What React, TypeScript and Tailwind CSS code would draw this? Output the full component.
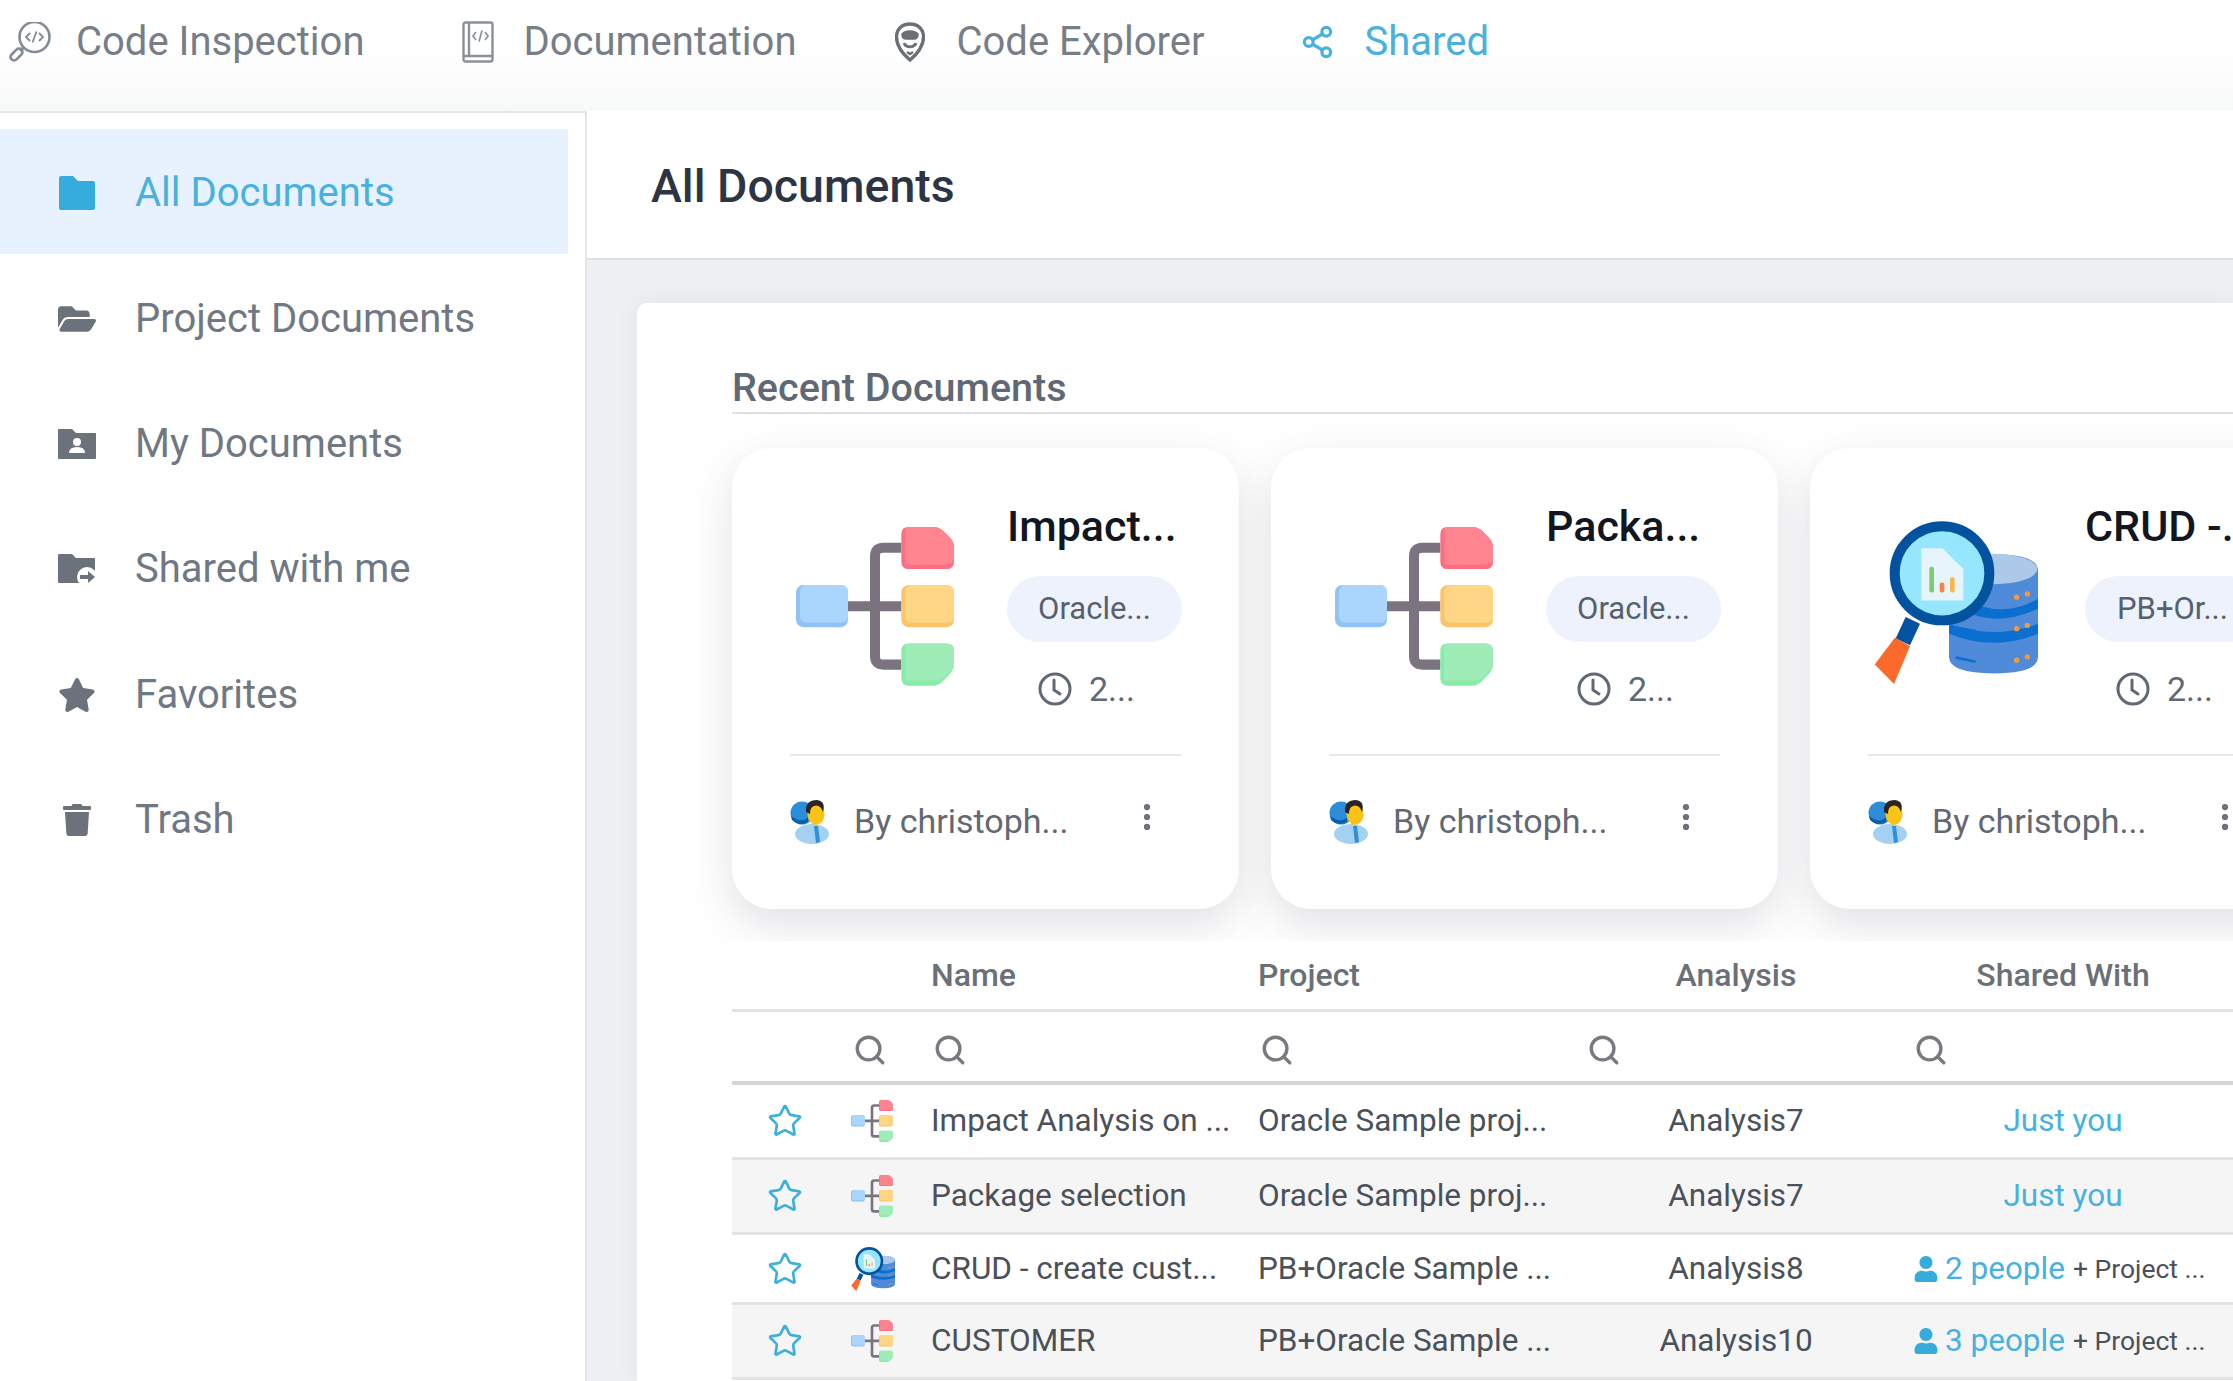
import { MoreVertical, Search, Share2, Star } from "lucide-react";
import { FaFolderOpen, FaStar, FaTrash, FaUser } from "react-icons/fa";

const font = { fontFamily: "Roboto, sans-serif" };

function InspectIcon() {
  return (
    <svg viewBox="0 0 43 40" className="h-[40px] w-[43px]" fill="none" stroke="#848b93" strokeWidth="2.6">
      <circle cx="25.5" cy="15" r="15" />
      <path d="M14 26 l-3 3" strokeWidth="3" />
      <rect x="0.5" y="29" width="14" height="7" rx="3.5" transform="rotate(-45 7.5 32.5)" />
      <path d="M21 11l-4 4 4 4M30 11l4 4-4 4M27.5 9.5l-4 11" strokeWidth="1.8" />
    </svg>
  );
}

function BookIcon() {
  return (
    <svg viewBox="0 0 32 42" className="h-[42px] w-[32px]" fill="none" stroke="#8b9198" strokeWidth="2.4">
      <rect x="1.5" y="1.5" width="29" height="39" rx="2" />
      <path d="M7 1.5v33M1.5 35h29" />
      <path d="M14 11l-3 4 3 4M23 11l3 4-3 4M20 9.5l-3 11" strokeWidth="1.7" />
    </svg>
  );
}

function ExplorerIcon() {
  return (
    <svg viewBox="0 0 30 40" className="h-[40px] w-[30px]" fill="none" stroke="#6b7076" strokeWidth="3.4">
      <path d="M15 2 C23 2 28.5 7 28.5 15 C28.5 25 21 33 15 38 C9 33 1.5 25 1.5 15 C1.5 7 7 2 15 2Z" />
      <path d="M7 12 C11 8 19 8 23 12 C23 16 21 17 19 17 L11 17 C9 17 7 16 7 12Z" fill="#6b7076" strokeWidth="1.5" />
      <path d="M9 21 C11 26 19 26 21 21" strokeWidth="3" />
      <path d="M12 30 L15 32 L18 30" strokeWidth="2.4" />
    </svg>
  );
}

function FolderIcon({ color }: { color: string }) {
  return (
    <svg viewBox="0 0 36 34" className="h-[34px] w-[36px]" fill={color}>
      <path d="M0 2 Q0 0 2 0 H14 L19 5 H34 Q36 5 36 7 V32 Q36 34 34 34 H2 Q0 34 0 32Z" />
    </svg>
  );
}

function FolderPersonIcon() {
  return (
    <svg viewBox="0 0 38 30" className="h-[30px] w-[38px]">
      <path d="M0 1 Q0 0 1 0 H14 L18 4 H37 Q38 4 38 5 V29 Q38 30 37 30 H1 Q0 30 0 29Z" fill="#6c727b" />
      <circle cx="19" cy="13" r="4" fill="#fff" />
      <path d="M11 24 Q11 18 19 18 Q27 18 27 24Z" fill="#fff" />
    </svg>
  );
}

function FolderShareIcon() {
  return (
    <svg viewBox="0 0 38 31" className="h-[31px] w-[38px]">
      <path d="M0 1 Q0 0 1 0 H14 L18 4 H36 Q37 4 37 5 V29 H1 Q0 29 0 28Z" fill="#6c727b" />
      <circle cx="29" cy="23" r="10" fill="#fff" />
      <path d="M22 21 h8 v-4 l7 6 -7 6 v-4 h-8z" fill="#6c727b" />
    </svg>
  );
}

function DiagramIcon({ className }: { className: string }) {
  return (
    <svg viewBox="228 318 474 476" className={className} preserveAspectRatio="none">
      <path d="M544 380 H490 Q465 380 465 405 V705 Q465 730 490 730 H544 M384 555 H544" fill="none" stroke="#7b7480" strokeWidth="30" />
      <rect x="228" y="492" width="156" height="126" rx="22" fill="#8fc3f5" />
      <rect x="240" y="492" width="144" height="112" rx="18" fill="#aad6fd" />
      <path d="M566 318 H640 Q660 318 675 335 L690 350 Q702 362 702 380 V422 Q702 444 680 444 H566 Q544 444 544 422 V340 Q544 318 566 318Z" fill="#fb6f80" />
      <path d="M566 318 H640 Q660 318 675 335 L690 350 Q702 362 702 380 V410 Q702 430 680 430 H556 V330 Q556 318 566 318Z" fill="#fe8490" />
      <rect x="544" y="492" width="158" height="126" rx="22" fill="#fcc468" />
      <rect x="556" y="492" width="146" height="112" rx="18" fill="#fed685" />
      <path d="M566 667 H680 Q702 667 702 689 V730 Q702 745 690 757 L670 778 Q655 793 640 793 H566 Q544 793 544 771 V689 Q544 667 566 667Z" fill="#86eca6" />
      <path d="M566 667 H680 Q702 667 702 689 V725 Q702 740 690 750 L672 768 Q660 778 645 778 H556 V680 Q556 667 566 667Z" fill="#9fecb8" />
    </svg>
  );
}

function DatabaseIcon({ className }: { className: string }) {
  return (
    <svg viewBox="280 300 492 492" className={className} preserveAspectRatio="none">
      <path d="M505 470 Q505 400 640 400 Q772 400 772 450 V710 Q772 760 640 760 Q505 760 505 710Z" fill="#4f8bd8" />
      <ellipse cx="640" cy="445" rx="130" ry="46" fill="#acc9ea" />
      <path d="M505 610 Q640 660 772 610 V640 Q640 695 505 640Z" fill="#0a6fcf" />
      <path d="M540 530 Q660 600 772 535 V565 Q640 625 540 565Z" fill="#0a6fcf" />
      <path d="M525 712 L585 725 M525 622 L585 632" stroke="#0a6fcf" strokeWidth="8" fill="none" />
      <g fill="#f39a3c">
        <circle cx="708" cy="530" r="8" />
        <circle cx="740" cy="520" r="8" />
        <circle cx="708" cy="625" r="8" />
        <circle cx="740" cy="615" r="8" />
        <circle cx="708" cy="720" r="8" />
        <circle cx="740" cy="710" r="8" />
      </g>
      <path d="M375 590 L345 655 L388 675 L418 610Z" fill="#03529f" />
      <path d="M343 652 L388 678 L340 792 L282 733Z" fill="#fb6a2a" />
      <circle cx="484" cy="458" r="142" fill="#96e6fd" stroke="#03529f" strokeWidth="30" />
      <path d="M422 382 H485 L548 445 V540 H422Z" fill="#e6f5fb" />
      <rect x="446" y="438" width="14" height="78" rx="6" fill="#7fcb6d" />
      <rect x="477" y="486" width="14" height="30" rx="6" fill="#fb8240" />
      <rect x="508" y="470" width="14" height="46" rx="6" fill="#fbb84a" />
    </svg>
  );
}

function AvatarIcon() {
  return (
    <svg viewBox="0 0 40 44" className="h-[44px] w-[40px]">
      <ellipse cx="22" cy="34" rx="17" ry="10" fill="#a4d0f1" />
      <path d="M24 26 L28 26 L30 42 L26 43Z" fill="#2f8fd8" />
      <circle cx="12" cy="13" r="11.5" fill="#2c8ed9" />
      <path d="M1 16 Q12 24 18 17 L18 22 Q10 27 2 20Z" fill="#0b5fae" />
      <ellipse cx="26" cy="14" rx="8.5" ry="11" fill="#fbc317" />
      <path d="M16 12 Q15 0 27 0 Q36 1 33 12 Q30 4 24 6 Q20 7 20 14Z" fill="#2a2522" />
    </svg>
  );
}

function ClockIcon() {
  return (
    <svg viewBox="0 0 34 34" className="h-[34px] w-[34px]" fill="none" stroke="#5e6975" strokeWidth="3">
      <circle cx="17" cy="17" r="15" />
      <path d="M16 8 V18 L22 22" strokeLinecap="round" />
    </svg>
  );
}

const sideItems = [
  { label: "All Documents", icon: <FolderIcon color="#36acdc" />, active: true },
  { label: "Project Documents", icon: <FaFolderOpen className="h-[34px] w-[38px] text-[#6c727b]" /> },
  { label: "My Documents", icon: <FolderPersonIcon /> },
  { label: "Shared with me", icon: <FolderShareIcon /> },
  { label: "Favorites", icon: <FaStar className="h-[36px] w-[38px] text-[#6c727b]" /> },
  { label: "Trash", icon: <FaTrash className="h-[32px] w-[30px] text-[#6c727b]" /> },
];

const cards = [
  { title: "Impact...", pill: "Oracle...", icon: <DiagramIcon className="h-[159px] w-[158px]" /> },
  { title: "Packa...", pill: "Oracle...", icon: <DiagramIcon className="h-[159px] w-[158px]" /> },
  { title: "CRUD -...", pill: "PB+Or...", icon: <DatabaseIcon className="-mt-[6px] h-[163px] w-[164px]" /> },
];

const rows = [
  { name: "Impact Analysis on ...", project: "Oracle Sample proj...", analysis: "Analysis7", shared: "Just you", crud: false, h: "h-[75px]" },
  { name: "Package selection", project: "Oracle Sample proj...", analysis: "Analysis7", shared: "Just you", crud: false, h: "h-[75px]" },
  { name: "CRUD - create cust...", project: "PB+Oracle Sample ...", analysis: "Analysis8", shared: "2 people", crud: true, h: "h-[70px]" },
  { name: "CUSTOMER", project: "PB+Oracle Sample ...", analysis: "Analysis10", shared: "3 people", crud: false, h: "h-[75px]" },
];

function Card({ title, pill, icon }: { title: string; pill: string; icon: React.ReactNode }) {
  return (
    <div className="h-[461px] w-[507px] shrink-0 rounded-[40px] bg-white px-[58px] shadow-[0_16px_44px_rgba(60,70,90,0.16)]">
      <div className="flex h-[308px] border-b-2 border-[#e6e8eb]">
        <div className="w-[217px] shrink-0 pl-[6px] pt-[79px]">{icon}</div>
        <div className="flex w-[175px] shrink-0 flex-col pt-[54px]">
          <div className="h-[48px] whitespace-nowrap text-[43px] font-medium leading-[48px] text-[#12161f]">{title}</div>
          <div className="mt-[26px] flex h-[66px] items-center justify-center rounded-full bg-[#edf2fd] text-[31px] text-[#56616d]">
            {pill}
          </div>
          <div className="mt-[21px] flex h-[52px] items-center gap-[17px] pl-[31px] text-[34px] text-[#5e6975]">
            <ClockIcon />
            <span>2...</span>
          </div>
        </div>
      </div>
      <div className="flex items-center pt-[40px]">
        <AvatarIcon />
        <span className="ml-[24px] w-[276px] whitespace-nowrap text-[34px] text-[#636873]">By christoph...</span>
        <MoreVertical className="-mt-[9px] h-[34px] w-[34px] text-[#6a6f78]" strokeWidth={2.4} />
      </div>
    </div>
  );
}

export default function App() {
  return (
    <div className="flex h-screen w-screen flex-col overflow-hidden bg-white" style={font}>
      <nav className="flex h-[111px] shrink-0 bg-gradient-to-b from-white from-40% to-[#f8f9f9] pl-[9px] pt-[19px] text-[40px] leading-[46px] text-[#777e87]">
        <div className="flex h-[46px] items-center gap-[24px]">
          <InspectIcon />
          <span>Code Inspection</span>
        </div>
        <div className="ml-[98px] flex h-[46px] items-center gap-[29px]">
          <BookIcon />
          <span>Documentation</span>
        </div>
        <div className="ml-[99px] flex h-[46px] items-center gap-[31px]">
          <ExplorerIcon />
          <span>Code Explorer</span>
        </div>
        <div className="ml-[95px] flex h-[46px] items-center gap-[30px] text-[#48b1dd]">
          <Share2 className="h-[36px] w-[35px]" strokeWidth={2.2} />
          <span>Shared</span>
        </div>
      </nav>

      <div className="flex min-h-0 flex-1">
        <aside className="w-[587px] shrink-0 border-r-2 border-t-2 border-[#e4e6e9] pt-[16px]">
          {sideItems.map((item) => (
            <div
              key={item.label}
              className={`flex h-[125.4px] w-[568px] items-center pt-[3px] text-[40px] ${
                item.active ? "bg-[#e8f2fe] text-[#48b1dd]" : "text-[#6f7883]"
              }`}
            >
              <div className="flex w-[135px] justify-center pl-[19px]">{item.icon}</div>
              <span>{item.label}</span>
            </div>
          ))}
        </aside>

        <main className="flex min-w-0 flex-1 flex-col bg-[#eff0f3]">
          <header className="flex h-[149px] shrink-0 items-center border-b-2 border-[#dfe1e4] bg-white pl-[64px] pt-[4px] text-[46.5px] font-medium text-[#2d3545]">
            All Documents
          </header>
          <div className="min-h-0 flex-1 pl-[50px] pt-[43px]">
            <div className="h-full rounded-tl-[10px] bg-white pl-[95px] pt-[60px] shadow-[0_0_24px_rgba(60,70,90,0.08)]">
              <h2 className="border-b-2 border-[#dfe1e4] text-[39.5px] font-medium leading-[49px] text-[#5f6874]">
                Recent Documents
              </h2>
              <div className="mt-[34px] flex gap-[32px]">
                {cards.map((card) => (
                  <Card key={card.title} {...card} />
                ))}
              </div>

              <div className="relative mt-[32px] bg-white text-[31.5px] text-[#4b5159]">
                <div className="grid h-[71px] grid-cols-[196px_327px_327px_327px_1fr] items-center border-b-[3px] border-[#e2e3e5] text-[32px] font-medium text-[#6b7077]">
                  <span />
                  <span className="pl-[3px]">Name</span>
                  <span className="pl-[3px]">Project</span>
                  <span className="pr-[19px] text-center">Analysis</span>
                  <span className="pr-[16px] text-center">Shared With</span>
                </div>
                <div className="grid h-[73px] grid-cols-[196px_327px_327px_327px_1fr] items-center border-b-[4px] border-[#d4d5d7] pt-[6px] text-[#777b80]">
                  <span className="pl-[121px]">
                    <Search className="h-[34px] w-[34px]" strokeWidth={2.4} />
                  </span>
                  {[0, 1, 2, 3].map((i) => (
                    <span key={i} className="pl-[5px]">
                      <Search className="h-[34px] w-[34px]" strokeWidth={2.4} />
                    </span>
                  ))}
                </div>
                {rows.map((row, i) => (
                  <div
                    key={row.name}
                    className={`grid ${row.h} grid-cols-[196px_327px_327px_327px_1fr] items-center border-b-[3px] border-[#e2e3e5] ${
                      i % 2 === 1 ? "bg-[#f5f5f6]" : ""
                    }`}
                  >
                    <div className="flex items-center pl-[35px]">
                      <Star className="h-[36px] w-[36px] text-[#3fb0dc]" strokeWidth={1.8} />
                      <div className="ml-[48px]">
                        {row.crud ? (
                          <DatabaseIcon className="h-[44px] w-[44px]" />
                        ) : (
                          <DiagramIcon className="h-[42px] w-[42px]" />
                        )}
                      </div>
                    </div>
                    <span className="whitespace-nowrap pl-[3px]">{row.name}</span>
                    <span className="whitespace-nowrap pl-[3px]">{row.project}</span>
                    <span className="pr-[19px] text-center">{row.analysis}</span>
                    {row.shared === "Just you" ? (
                      <span className="pr-[16px] text-center text-[#48b1dd]">{row.shared}</span>
                    ) : (
                      <span className="flex items-center whitespace-nowrap pl-[5px]">
                        <FaUser className="h-[26px] w-[24px] text-[#36acdc]" />
                        <span className="ml-[7px] text-[#48b1dd]">{row.shared}</span>
                        <span className="ml-[8px] text-[26.5px]">+ Project ...</span>
                      </span>
                    )}
                  </div>
                ))}
              </div>
            </div>
          </div>
        </main>
      </div>
    </div>
  );
}
